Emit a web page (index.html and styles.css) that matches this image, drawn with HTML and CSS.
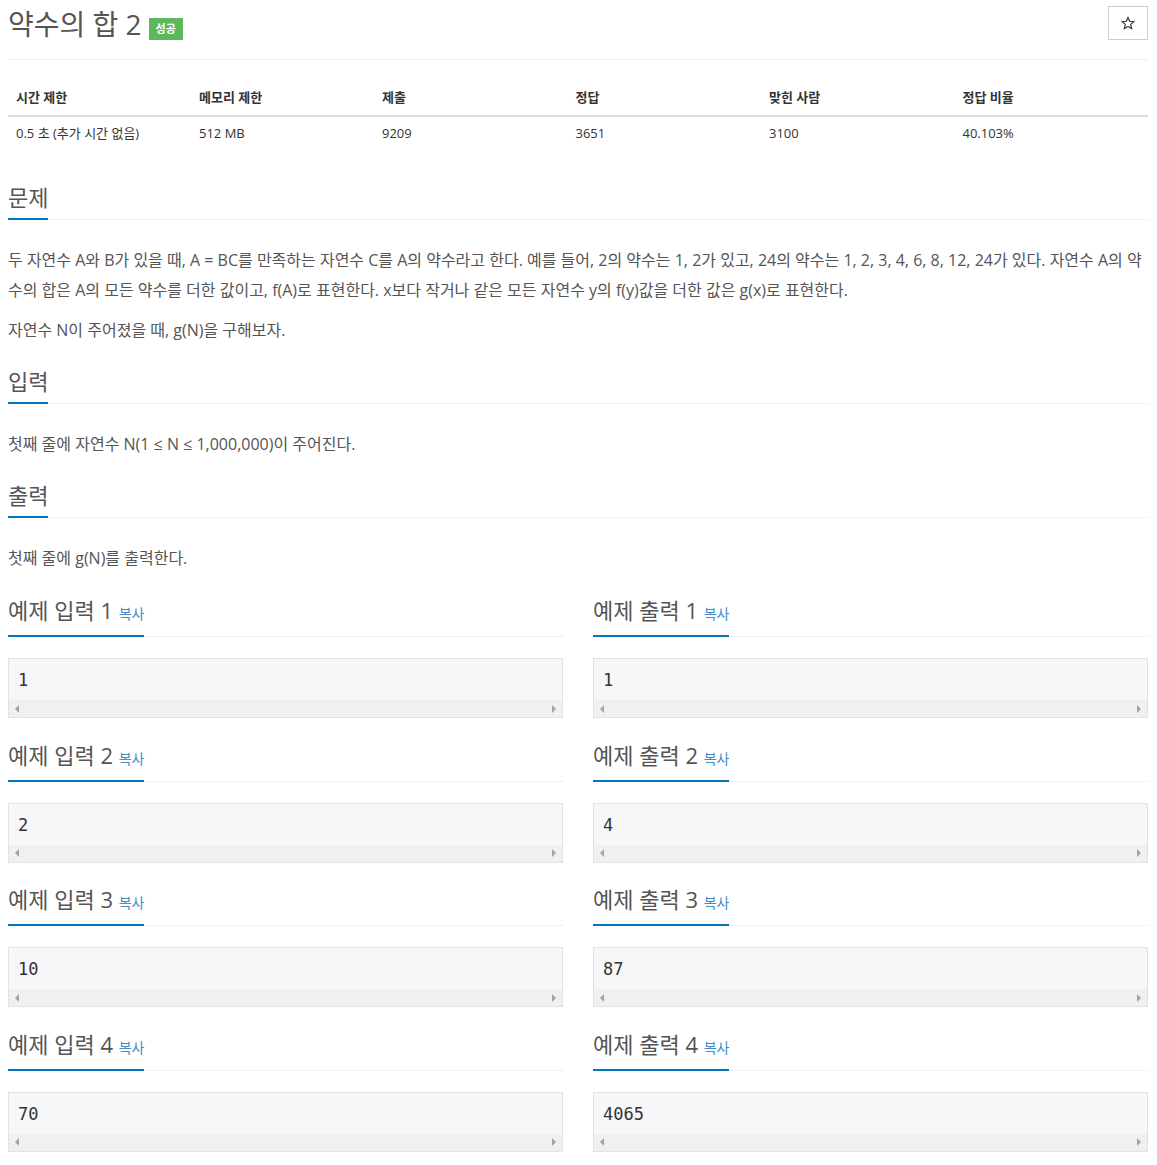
FILE: index.html
```html
<!DOCTYPE html>
<html lang="ko">
<head>
<meta charset="utf-8">
<title>약수의 합 2</title>
<link rel="stylesheet" href="styles.css">
</head>
<body>
<div class="container">
  <div class="page-header">
    <h1 class="title">약수의 합 2 <span class="badge">성공</span></h1>
    <button class="star-btn" type="button"><svg width="14" height="14" viewBox="0 0 24 24"><path d="M12 2.5l2.9 6.6 7.1.6-5.4 4.7 1.6 7-6.2-3.7-6.2 3.7 1.6-7L2 9.7l7.1-.6z" fill="none" stroke="#333" stroke-width="2" stroke-linejoin="miter"/></svg></button>
  </div>

  <table class="info">
    <thead>
      <tr><th class="w16">시간 제한</th><th class="w16">메모리 제한</th><th class="w17">제출</th><th class="w17">정답</th><th class="w17">맞힌 사람</th><th class="w17">정답 비율</th></tr>
    </thead>
    <tbody>
      <tr><td>0.5 초 (추가 시간 없음)</td><td>512 MB</td><td>9209</td><td>3651</td><td>3100</td><td>40.103%</td></tr>
    </tbody>
  </table>

  <section class="sec">
    <div class="headline"><h2>문제</h2></div>
    <div class="text">
      <p>두 자연수 A와 B가 있을 때, A = BC를 만족하는 자연수 C를 A의 약수라고 한다. 예를 들어, 2의 약수는 1, 2가 있고, 24의 약수는 1, 2, 3, 4, 6, 8, 12, 24가 있다. 자연수 A의 약수의 합은 A의 모든 약수를 더한 값이고, f(A)로 표현한다. x보다 작거나 같은 모든 자연수 y의 f(y)값을 더한 값은 g(x)로 표현한다.</p>
      <p>자연수 N이 주어졌을 때, g(N)을 구해보자.</p>
    </div>
  </section>

  <section class="sec">
    <div class="headline"><h2>입력</h2></div>
    <div class="text"><p>첫째 줄에 자연수 N(1 ≤ N ≤ 1,000,000)이 주어진다.</p></div>
  </section>

  <section class="sec">
    <div class="headline"><h2>출력</h2></div>
    <div class="text"><p>첫째 줄에 g(N)를 출력한다.</p></div>
  </section>

  <div class="samples">
    <section class="sample">
      <div class="headline"><h2>예제 입력 1 <a class="copy">복사</a></h2></div>
      <div class="pre"><pre>1</pre><div class="sbar"><i class="al"></i><i class="ar"></i></div></div>
    </section>
    <section class="sample">
      <div class="headline"><h2>예제 출력 1 <a class="copy">복사</a></h2></div>
      <div class="pre"><pre>1</pre><div class="sbar"><i class="al"></i><i class="ar"></i></div></div>
    </section>
    <section class="sample">
      <div class="headline"><h2>예제 입력 2 <a class="copy">복사</a></h2></div>
      <div class="pre"><pre>2</pre><div class="sbar"><i class="al"></i><i class="ar"></i></div></div>
    </section>
    <section class="sample">
      <div class="headline"><h2>예제 출력 2 <a class="copy">복사</a></h2></div>
      <div class="pre"><pre>4</pre><div class="sbar"><i class="al"></i><i class="ar"></i></div></div>
    </section>
    <section class="sample">
      <div class="headline"><h2>예제 입력 3 <a class="copy">복사</a></h2></div>
      <div class="pre"><pre>10</pre><div class="sbar"><i class="al"></i><i class="ar"></i></div></div>
    </section>
    <section class="sample">
      <div class="headline"><h2>예제 출력 3 <a class="copy">복사</a></h2></div>
      <div class="pre"><pre>87</pre><div class="sbar"><i class="al"></i><i class="ar"></i></div></div>
    </section>
    <section class="sample">
      <div class="headline"><h2>예제 입력 4 <a class="copy">복사</a></h2></div>
      <div class="pre"><pre>70</pre><div class="sbar"><i class="al"></i><i class="ar"></i></div></div>
    </section>
    <section class="sample">
      <div class="headline"><h2>예제 출력 4 <a class="copy">복사</a></h2></div>
      <div class="pre"><pre>4065</pre><div class="sbar"><i class="al"></i><i class="ar"></i></div></div>
    </section>
  </div>
</div>
</body>
</html>
```

FILE: styles.css
```css
html, body {
  margin: 0;
  padding: 0;
  overflow: hidden;
}
body {
  font-family: "Open Sans", "Noto Sans CJK KR", sans-serif;
  color: #333;
  background: #fff;
  font-size: 13px;
}
.container {
  padding: 0 9px 0 8px;
}
.page-header {
  display: flex;
  justify-content: space-between;
  align-items: flex-start;
  border-bottom: 1px solid #eee;
  height: 60px;
  box-sizing: border-box;
  margin-bottom: 19px;
}
.title {
  margin: 6px 0 0;
  font-size: 28px;
  font-weight: 400;
  color: #555;
  line-height: 36px;
  display: flex;
  align-items: center;
}
.badge {
  display: inline-block;
  background: #5cb85c;
  color: #fff;
  font-size: 11px;
  font-weight: 700;
  line-height: 22px;
  padding: 0 7px;
  margin-left: 7px;
  margin-top: 10px;
}
.star-btn {
  margin-top: 6px;
  width: 40px;
  height: 34px;
  border: 1px solid #ccc;
  background: #fff;
  padding: 0;
  display: flex;
  align-items: center;
  justify-content: center;
}
.info {
  width: 100%;
  border-collapse: collapse;
  margin-bottom: 32px;
  table-layout: fixed;
}
.info .w16 { width: 16%; }
.info .w17 { width: 17%; }
.info th {
  text-align: left;
  font-weight: 700;
  font-size: 13px;
  padding: 8px;
  line-height: 20px;
  border-bottom: 2px solid #ddd;
}
.info td {
  font-size: 13px;
  padding: 6px 8px 9px;
  line-height: 20px;
}
.sec {
  margin-bottom: 23px;
}
.headline {
  border-bottom: 1px dotted #e4e4e4;
  margin-bottom: 25px;
  line-height: 0;
}
.headline h2 {
  display: inline-block;
  margin: 0 0 -1px 0;
  padding-bottom: 8px;
  border-bottom: 2px solid #0076c0;
  font-size: 22px;
  font-weight: 400;
  line-height: 26px;
  color: #555;
}
.copy {
  font-size: 14px;
  color: #428bca;
  cursor: pointer;
}
.text {
  font-size: 16px;
  line-height: 30px;
  color: #555;
}
.text p {
  margin: 0 0 10px;
}
.samples {
  display: grid;
  grid-template-columns: 1fr 1fr;
  column-gap: 30px;
  margin-top: 24px;
}
.sample {
  margin-bottom: 23.6px;
}
.sample .headline {
  margin-bottom: 21px;
}
.pre {
  border: 1px solid #e1e1e8;
  background: #f7f7f9;
}
.pre pre {
  margin: 0;
  padding: 10px 9px 9px;
  font-family: "DejaVu Sans Mono", monospace;
  font-size: 17px;
  line-height: 22px;
  color: #333;
}
.sbar {
  height: 17px;
  background: #f0f0f0;
  display: flex;
  justify-content: space-between;
  align-items: center;
  padding: 0 6px;
}
.sbar i {
  width: 0;
  height: 0;
  border-top: 4px solid transparent;
  border-bottom: 4px solid transparent;
}
.sbar .al { border-right: 4px solid #a3a3a3; }
.sbar .ar { border-left: 4px solid #a3a3a3; }
```
